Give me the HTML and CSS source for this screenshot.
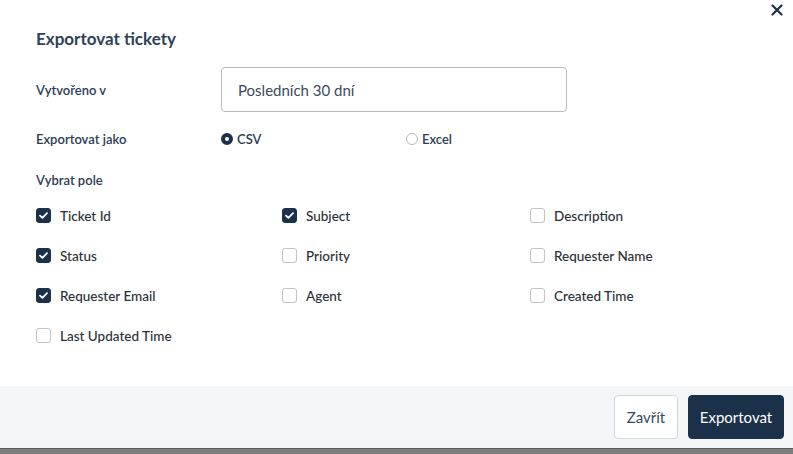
FILE: index.html
```html
<!DOCTYPE html>
<html lang="cs">
<head>
<meta charset="utf-8">
<title>Exportovat tickety</title>
<link rel="stylesheet" href="styles.css">
</head>
<body>
<div class="modal">
  <button class="close" aria-label="Zavřít">
    <svg width="12" height="12" viewBox="0 0 12 12"><path d="M1.5 1.5 L10.5 10.5 M10.5 1.5 L1.5 10.5" stroke="#1f3147" stroke-width="2.2" stroke-linecap="round"/></svg>
  </button>
  <div class="body">
    <h2 class="title">Exportovat tickety</h2>
    <div class="row row-input">
      <div class="label">Vytvořeno v</div>
      <div class="input">Posledních 30 dní</div>
    </div>
    <div class="row row-radio">
      <div class="label">Exportovat jako</div>
      <div class="radios">
        <label class="radio checked"><span class="dot"></span>CSV</label>
        <label class="radio"><span class="dot"></span>Excel</label>
      </div>
    </div>
    <div class="label section">Vybrat pole</div>
    <div class="fields">
      <label class="cb on"><span class="box"><svg width="9" height="7" viewBox="0 0 9 7"><path d="M1 3.6 L3.4 5.8 L8 1.2" fill="none" stroke="#fff" stroke-width="1.8" stroke-linecap="round" stroke-linejoin="round"/></svg></span>Ticket Id</label>
      <label class="cb on"><span class="box"><svg width="9" height="7" viewBox="0 0 9 7"><path d="M1 3.6 L3.4 5.8 L8 1.2" fill="none" stroke="#fff" stroke-width="1.8" stroke-linecap="round" stroke-linejoin="round"/></svg></span>Subject</label>
      <label class="cb"><span class="box"></span>Description</label>
      <label class="cb on"><span class="box"><svg width="9" height="7" viewBox="0 0 9 7"><path d="M1 3.6 L3.4 5.8 L8 1.2" fill="none" stroke="#fff" stroke-width="1.8" stroke-linecap="round" stroke-linejoin="round"/></svg></span>Status</label>
      <label class="cb"><span class="box"></span>Priority</label>
      <label class="cb"><span class="box"></span>Requester Name</label>
      <label class="cb on"><span class="box"><svg width="9" height="7" viewBox="0 0 9 7"><path d="M1 3.6 L3.4 5.8 L8 1.2" fill="none" stroke="#fff" stroke-width="1.8" stroke-linecap="round" stroke-linejoin="round"/></svg></span>Requester Email</label>
      <label class="cb"><span class="box"></span>Agent</label>
      <label class="cb"><span class="box"></span>Created Time</label>
      <label class="cb"><span class="box"></span>Last Updated Time</label>
    </div>
  </div>
  <div class="footer">
    <button class="btn btn-secondary">Zavřít</button>
    <button class="btn btn-primary">Exportovat</button>
  </div>
</div>
<div class="backdrop"></div>
</body>
</html>
```
FILE: styles.css
```css
html, body {
  margin: 0;
  padding: 0;
  background: #ffffff;
  font-family: "Lato", "Open Sans", sans-serif;
  color: #2c3e50;
}
.modal {
  position: relative;
  width: 793px;
  height: 448px;
  background: #fff;
  display: flex;
  flex-direction: column;
}
.close {
  position: absolute;
  top: 4px;
  right: 10px;
  width: 12px;
  height: 12px;
  padding: 0;
  border: 0;
  background: none;
  display: flex;
}
.body {
  flex: 1;
  padding: 28px 36px 0 36px;
}
.title {
  margin: 0;
  font-size: 17px;
  font-weight: 700;
  line-height: 22px;
  color: #2e4257;
}
.row {
  display: grid;
  grid-template-columns: 185px 1fr;
  align-items: center;
}
.row-input {
  margin-top: 17px;
}
.label {
  font-size: 13px;
  font-weight: 600;
  color: #2c3e55;
}
.input {
  width: 346px;
  height: 45px;
  box-sizing: border-box;
  border: 1px solid #b4bcc8;
  border-radius: 4px;
  padding: 0 16px;
  display: flex;
  align-items: center;
  font-size: 15px;
  color: #3b4a5e;
}
.row-radio {
  margin-top: 19px;
}
.radios {
  display: grid;
  grid-template-columns: 185px 1fr;
}
.radio {
  display: flex;
  align-items: center;
  font-size: 13px;
  font-weight: 600;
  color: #2c3e55;
}
.dot {
  width: 12px;
  height: 12px;
  box-sizing: border-box;
  border-radius: 50%;
  border: 1px solid #b8b8b8;
  margin-right: 4px;
  background: #fff;
}
.radio.checked .dot {
  border: 4px solid #1b3049;
}
.section {
  margin-top: 25px;
}
.fields {
  margin-top: 20px;
  display: grid;
  grid-template-columns: 246px 248px 1fr;
  grid-auto-rows: 40px;
}
.cb {
  display: flex;
  align-items: flex-start;
  font-size: 13.5px;
  font-weight: 500;
  color: #2a2f36;
  line-height: 16px;
}
.box {
  width: 15px;
  height: 15px;
  box-sizing: border-box;
  border: 1px solid #c3c3c3;
  border-radius: 3px;
  margin-right: 9px;
  display: flex;
  align-items: center;
  justify-content: center;
  background: #fff;
}
.cb.on .box {
  background: #1b3049;
  border-color: #1b3049;
}
.footer {
  height: 62px;
  box-sizing: border-box;
  background: #f4f5f7;
  display: flex;
  justify-content: flex-end;
  align-items: flex-start;
  gap: 10px;
  padding: 9px 9px 0 0;
}
.btn {
  height: 44px;
  border-radius: 4px;
  font-family: inherit;
  font-size: 15px;
  padding: 0 13px;
}
.btn-secondary {
  background: #fff;
  border: 1px solid #d3d8de;
  color: #3a4a5e;
  width: 64px;
  padding: 0;
}
.btn-primary {
  background: #1b3049;
  border: 1px solid #1b3049;
  color: #fff;
  width: 96px;
  padding: 0;
}
.backdrop {
  height: 6px;
  background: #7d7d7d;
  border-top: 1px solid #5f5f5f;
  box-sizing: border-box;
}
```
